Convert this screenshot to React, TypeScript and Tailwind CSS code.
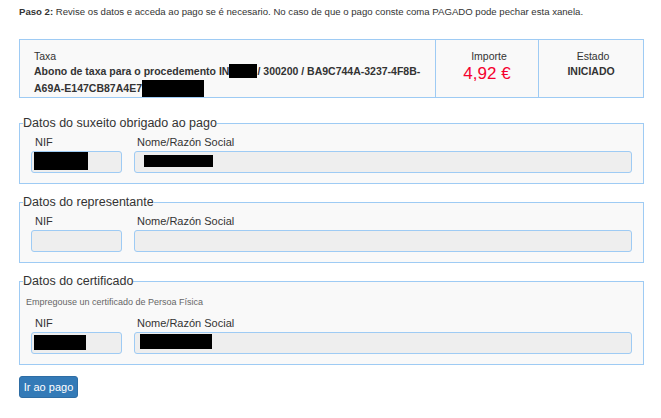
import React from "react";

const inputBox = "h-[22px] bg-[#eeeeee] border border-[#9ecbf4] rounded-[3px] flex items-start";

function Redact({ w, h, ml, mt }: { w: number; h: number; ml: number; mt: number }) {
     return <div className="bg-black" style={{ width: w, height: h, marginLeft: ml, marginTop: mt }} />;
}

function Fields({ nif, name }: { nif?: React.ReactNode; name?: React.ReactNode }) {
     return (
          <div className="flex gap-[12px] px-[11px]">
               <div className="w-[91px]">
                    <div className="text-[11px] leading-[14px] text-[#333] pl-[4px]">NIF</div>
                    <div className={`${inputBox} mt-[2px]`}>{nif}</div>
               </div>
               <div className="flex-1">
                    <div className="text-[11px] leading-[14px] text-[#333] pl-[3px]">Nome/Razón Social</div>
                    <div className={`${inputBox} mt-[2px]`}>{name}</div>
               </div>
          </div>
     );
}

function Section({ title, children, className = "" }: { title: string; children: React.ReactNode; className?: string }) {
     return (
          <fieldset className={`border border-[#9ecbf4] bg-[#f9f9f9] pb-[10px] ${className}`}>
               <legend className="ml-[3px] text-[12.5px] leading-[16px] text-[#333]">{title}</legend>
               {children}
          </fieldset>
     );
}

export default function App() {
     return (
          <div
               className="w-[661px] h-[418px] bg-white text-[#333] px-[19px] pt-[5px] overflow-hidden"
               style={{ fontFamily: '"Liberation Sans", Arial, sans-serif' }}
          >
               <p className="text-[9.6px] leading-[14px]">
                    <b>Paso 2:</b> Revise os datos e acceda ao pago se é necesario. No caso de que o pago conste coma PAGADO pode pechar esta xanela.
               </p>

               {/* resumo da taxa */}
               <div className="mt-[20px] w-[625px] border border-[#9ecbf4] bg-[#f9f9f9] flex">
                    <div className="w-[416px] border-r border-[#9ecbf4] pl-[14px] pt-[9px]">
                         <div className="text-[10.5px] leading-[14px]">Taxa</div>
                         <div className="text-[10.5px] leading-[17px] font-bold">
                              Abono de taxa para o procedemento IN
                              <span className="inline-block align-middle bg-black w-[28px] h-[14px] -mt-[3px]" />
                              / 300200 / BA9C744A-3237-4F8B-
                              <br />
                              A69A-E147CB87A4E7
                              <span className="inline-block align-middle bg-black w-[62px] h-[17px] -mt-[2px]" />
                         </div>
                    </div>
                    <div className="w-[103px] border-r border-[#9ecbf4] text-center pt-[9px]">
                         <div className="text-[10.5px] leading-[14px] pl-[4px]">Importe</div>
                         <div className="text-[17px] leading-[22px] text-[#f5002e]">4,92 €</div>
                    </div>
                    <div className="flex-1 text-center pt-[9px]">
                         <div className="text-[10.5px] leading-[14px] pl-[4px]">Estado</div>
                         <div className="text-[10.5px] leading-[17px] font-bold">INICIADO</div>
                    </div>
               </div>

               <Section title="Datos do suxeito obrigado ao pago" className="mt-[17px] w-[625px]">
                    <div className="pt-[4px]">
                         <Fields nif={<Redact w={54} h={18} ml={2} mt={0} />} name={<Redact w={69} h={12} ml={9} mt={3} />} />
                    </div>
               </Section>

               <Section title="Datos do representante" className="mt-[10px] w-[625px]">
                    <div className="pt-[4px]">
                         <Fields />
                    </div>
               </Section>

               <Section title="Datos do certificado" className="mt-[10px] w-[625px]">
                    <div className="pt-[7px] pl-[6px] text-[9px] leading-[13px] text-[#666]">Empregouse un certificado de Persoa Física</div>
                    <div className="pt-[7px]">
                         <Fields nif={<Redact w={52} h={15} ml={2} mt={2} />} name={<Redact w={72} h={15} ml={5} mt={1} />} />
                    </div>
               </Section>

               <button className="mt-[11px] w-[59px] h-[22px] bg-[#337ab7] border border-[#2e6da4] rounded-[3px] text-white text-[11px]">
                    Ir ao pago
               </button>
          </div>
     );
}
